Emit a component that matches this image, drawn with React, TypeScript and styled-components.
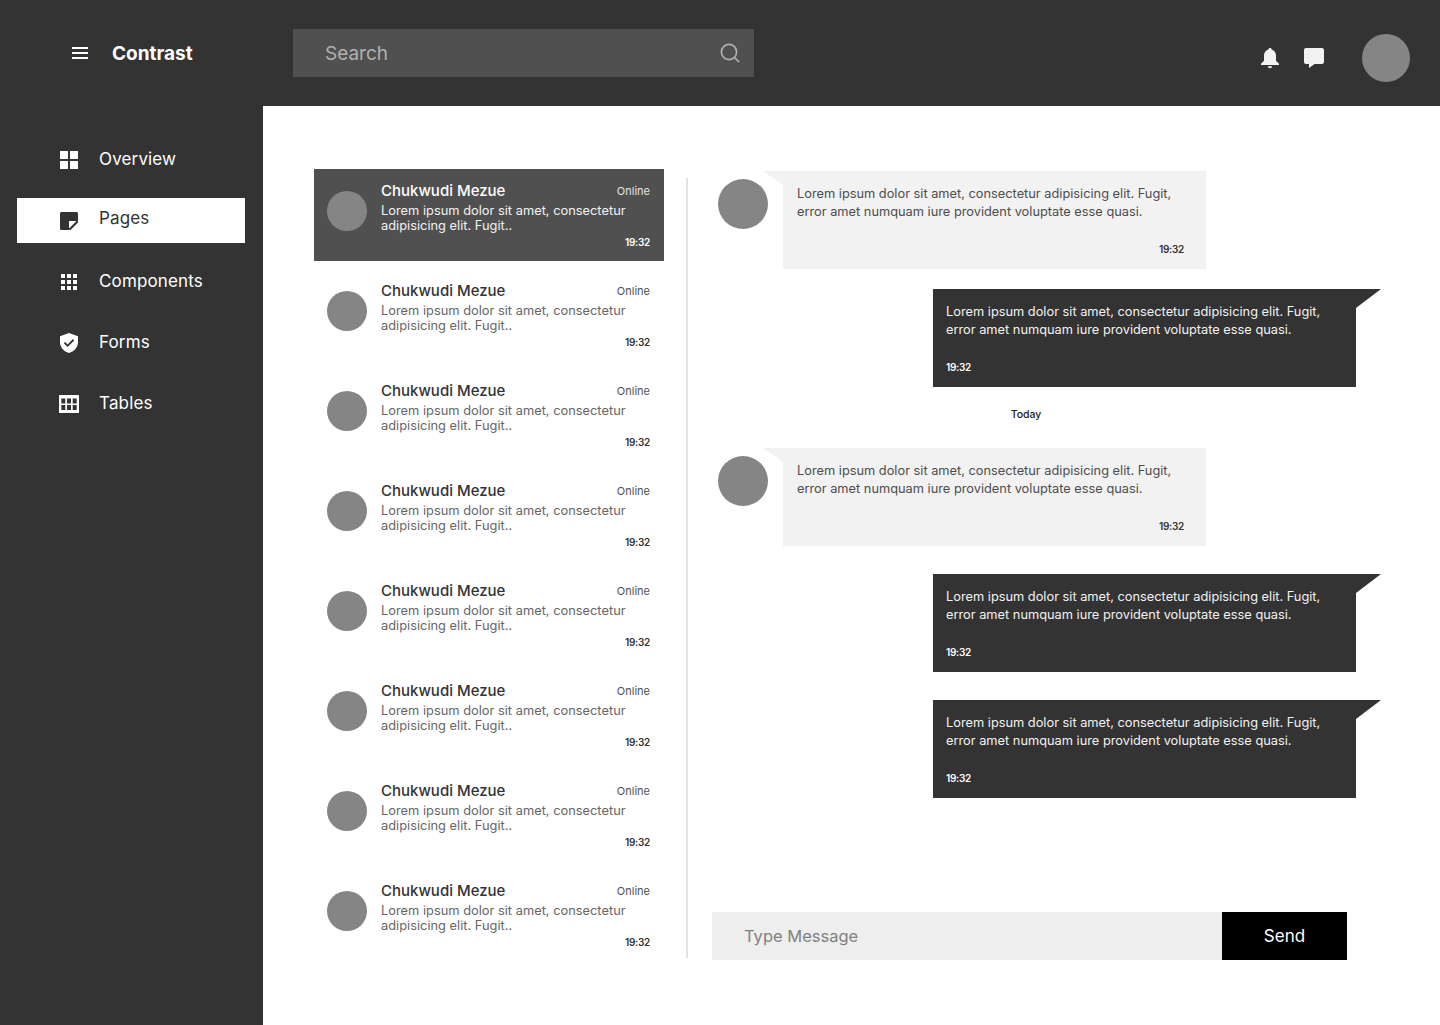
import React from 'react';
import styled, { createGlobalStyle } from 'styled-components';

const GlobalStyle = createGlobalStyle`
  * { box-sizing: border-box; }
  html, body { margin: 0; padding: 0; background: #ffffff; }
  body { font-family: Inter, 'Liberation Sans', sans-serif; color: #333333; }
`;

const Shell = styled.div`
  display: grid;
  grid-template-columns: 263px 1fr;
  grid-template-rows: 106px 919px;
  width: 1440px;
  height: 1025px;
  overflow: hidden;
`;

const Header = styled.header`
  grid-column: 1 / 3;
  display: flex;
  align-items: center;
  background: #333333;
  padding-left: 72px;
`;

const Brand = styled.div`
  display: flex;
  align-items: center;
  gap: 24px;
  width: 221px;
  color: #ffffff;
  font-size: 19px;
  font-weight: 700;
`;

const SearchBox = styled.div`
  display: flex;
  align-items: center;
  justify-content: space-between;
  width: 461px;
  height: 48px;
  padding: 0 14px 0 32px;
  background: #505050;
  color: #b0b0b0;
  font-size: 19px;
`;

const HeaderIcons = styled.div`
  display: flex;
  align-items: center;
  margin-left: auto;
  padding: 10px 30px 0 0;
`;

const IconSlot = styled.div<{ $right: number }>`
  display: flex;
  margin-right: ${p => p.$right}px;
`;

const Avatar = styled.div<{ $size: number }>`
  flex: none;
  width: ${p => p.$size}px;
  height: ${p => p.$size}px;
  border-radius: 50%;
  background: #858585;
`;

const Sidebar = styled.nav`
  display: flex;
  flex-direction: column;
  gap: 16px;
  padding: 31px 18px 0 17px;
  background: #333333;
`;

const NavItem = styled.a<{ $active?: boolean }>`
  display: flex;
  align-items: center;
  gap: 21px;
  height: 45px;
  padding-left: 43px;
  background: ${p => (p.$active ? '#ffffff' : 'transparent')};
  color: ${p => (p.$active ? '#333333' : '#ffffff')};
  font-size: 17px;
  letter-spacing: 0.15px;
`;

const NavIconBox = styled.span`
  display: flex;
  align-items: center;
  justify-content: center;
  width: 18px;

  svg {
    flex: none;
  }
`;

const NavLabel = styled.span<{ $active?: boolean }>`
  padding-bottom: ${p => (p.$active ? 5 : 2)}px;
`;

const Main = styled.main`
  display: flex;
  padding: 63px 0 0 51px;
`;

const ThreadList = styled.div`
  display: flex;
  flex-direction: column;
  gap: 8px;
  width: 350px;
`;

const Thread = styled.div<{ $active?: boolean }>`
  display: flex;
  align-items: flex-start;
  gap: 14px;
  height: 92px;
  padding: 13px 14px 0 13px;
  background: ${p => (p.$active ? '#505050' : 'transparent')};
  color: ${p => (p.$active ? '#ffffff' : '#333333')};

  & > ${Avatar} {
    margin-top: 9px;
  }
`;

const ThreadBody = styled.div`
  flex: 1;
  min-width: 0;
`;

const ThreadTop = styled.div`
  display: flex;
  align-items: center;
  justify-content: space-between;
  height: 18px;
`;

const ThreadName = styled.span`
  padding-bottom: 2px;
  font-size: 15px;
  font-weight: 500;
`;

const ThreadStatus = styled.span`
  font-size: 11px;
  opacity: 0.85;
`;

const ThreadText = styled.p<{ $active?: boolean }>`
  margin: 3px 0 0;
  font-size: 12.85px;
  line-height: 15px;
  color: ${p => (p.$active ? '#f2f2f2' : '#666666')};
`;

const ThreadTime = styled.div`
  margin-top: 1px;
  text-align: right;
  font-size: 10px;
  font-weight: 600;
  letter-spacing: -0.3px;
  line-height: 16px;
`;

const Divider = styled.div`
  flex: none;
  width: 2px;
  height: 780px;
  margin: 9px 24px 0 22px;
  background: #e2e2e2;
`;

const ChatPanel = styled.section`
  display: flex;
  flex-direction: column;
  width: 660px;
  height: 791px;
  padding-top: 2px;
`;

const Messages = styled.div`
  flex: 1;
  display: flex;
  flex-direction: column;
`;

const IncomingRow = styled.div`
  display: flex;
  gap: 15px;
  padding-left: 6px;

  & > ${Avatar} {
    margin-top: 8px;
  }
`;

const Bubble = styled.div<{ $dark?: boolean }>`
  position: relative;
  width: 423px;
  height: 98px;
  padding: ${p => (p.$dark ? '14px 13px' : '14px 14px')};
  background: ${p => (p.$dark ? '#333333' : '#f2f2f2')};
  color: ${p => (p.$dark ? '#f2f2f2' : '#4d4d4d')};

  &::before {
    content: '';
    position: absolute;
    top: 0;
    ${p => (p.$dark
      ? `left: 100%; width: 25px; height: 19px; background: #333333; clip-path: polygon(0 0, 100% 0, 0 100%);`
      : `right: 100%; width: 20px; height: 14px; background: #f2f2f2; clip-path: polygon(0 0, 100% 0, 100% 100%);`)}
  }
`;

const OutgoingBubble = styled(Bubble)<{ $top: number }>`
  margin-left: 221px;
  margin-top: ${p => p.$top}px;
`;

const BubbleText = styled.p`
  margin: 0;
  font-size: 12.8px;
  line-height: 18px;
`;

const BubbleTime = styled.div<{ $dark?: boolean }>`
  margin-top: 22px;
  padding-right: ${p => (p.$dark ? 0 : 8)}px;
  text-align: ${p => (p.$dark ? 'left' : 'right')};
  font-size: 10px;
  font-weight: 600;
  letter-spacing: -0.3px;
  line-height: 12px;
  color: ${p => (p.$dark ? '#ffffff' : '#333333')};
`;

const DayMark = styled.div`
  width: 628px;
  margin: 21px 0 26px;
  text-align: center;
  font-size: 10.5px;
  font-weight: 500;
  line-height: 14px;
  color: #222222;
`;

const Composer = styled.div`
  display: flex;
  width: 635px;
  height: 48px;
`;

const ComposerField = styled.div`
  flex: 1;
  display: flex;
  align-items: center;
  padding-left: 32px;
  background: #eeeeee;
  color: #808080;
  font-size: 16.5px;
`;

const SendButton = styled.button`
  width: 125px;
  border: 0;
  background: #000000;
  color: #ffffff;
  font-family: inherit;
  font-size: 17px;
`;

const MenuIcon = () => (
  <svg width="16" height="12" viewBox="0 0 16 12" fill="#fff">
    <path d="M0 0h16v2H0zM0 5h16v2H0zM0 10h16v2H0z" />
  </svg>
);

const SearchIcon = () => (
  <svg width="20" height="20" viewBox="0 0 20 20" fill="none" stroke="#b0b0b0" strokeWidth="1.7">
    <circle cx="9" cy="9" r="7.6" />
    <path d="M14.5 14.5l4.6 4.6" />
  </svg>
);

const BellIcon = () => (
  <svg width="18" height="21" viewBox="0 0 18 21" fill="#f2f2f2">
    <path d="M9 0c1 0 1.7.7 1.7 1.6 2.700.8 4.300 3.200 4.300 6v5.200l3 3v1.200H0v-1.200l3-3V7.600c0-2.800 1.600-5.200 4.300-6C7.300.7 8 0 9 0z" />
    <path d="M6.800 18.200h4.400c0 1.200-1 2-2.200 2s-2.200-.8-2.200-2z" />
  </svg>
);

const ChatIcon = () => (
  <svg width="20" height="20" viewBox="0 0 20 20" fill="#f2f2f2">
    <path d="M2 0h16c1.100 0 2 .9 2 2v12c0 1.100-.9 2-2 2h-7.400L5 20v-4H2c-1.100 0-2-.9-2-2V2C0 .9.900 0 2 0z" />
  </svg>
);

const OverviewIcon = () => (
  <svg width="18" height="18" viewBox="0 0 18 18" fill="currentColor">
    <path d="M0 0h8v8H0zM10 0h8v8h-8zM0 10h8v8H0zM10 10h8v8h-8z" />
  </svg>
);

const PagesIcon = () => (
  <svg width="18" height="18" viewBox="0 0 18 18" fill="currentColor">
    <path
      fillRule="evenodd"
      d="M1.500 0h15c.8 0 1.500.7 1.500 1.500v9L10.500 18h-9C.7 18 0 17.300 0 16.500v-15C0 .7.700 0 1.500 0zM9 9v7.500L16.500 9H9z"
    />
  </svg>
);

const ComponentsIcon = () => (
  <svg width="16" height="16" viewBox="0 0 16 16" fill="currentColor">
    <path d="M0 0h4v4H0zM6 0h4v4H6zM12 0h4v4h-4zM0 6h4v4H0zM6 6h4v4H6zM12 6h4v4h-4zM0 12h4v4H0zM6 12h4v4H6zM12 12h4v4h-4z" />
  </svg>
);

const FormsIcon = () => (
  <svg width="18" height="20" viewBox="0 0 18 20" fill="currentColor">
    <path
      fillRule="evenodd"
      d="M9 0l9 3.200v6c0 5-3.800 9.300-9 10.800-5.200-1.500-9-5.800-9-10.800v-6L9 0zM7.600 11.400L5.100 8.900 3.800 10.200l3.800 3.800 6.600-6.600-1.300-1.300-5.300 5.300z"
    />
  </svg>
);

const TablesIcon = () => (
  <svg width="20" height="18" viewBox="0 0 20 18" fill="currentColor">
    <path
      fillRule="evenodd"
      d="M1 0h18c.6 0 1 .4 1 1v16c0 .6-.4 1-1 1H1c-.6 0-1-.4-1-1V1c0-.6.4-1 1-1zM2.300 3.500v5h4v-5h-4zm5.700 0v5h4v-5H8zm5.700 0v5h4v-5h-4zM2.300 10v5h4v-5h-4zm5.700 0v5h4v-5H8zm5.700 0v5h4v-5h-4z"
    />
  </svg>
);

const navItems = [
  { label: 'Overview', icon: <OverviewIcon /> },
  { label: 'Pages', icon: <PagesIcon />, active: true },
  { label: 'Components', icon: <ComponentsIcon /> },
  { label: 'Forms', icon: <FormsIcon /> },
  { label: 'Tables', icon: <TablesIcon /> },
];

const threads = Array.from({ length: 8 }, (_, i) => ({ id: i, active: i === 0 }));

const messageText = (
  <>
    Lorem ipsum dolor sit amet, consectetur adipisicing elit. Fugit,
    <br />
    error amet numquam iure provident voluptate esse quasi.
  </>
);

const Incoming = () => (
  <IncomingRow>
    <Avatar $size={50} />
    <Bubble>
      <BubbleText>{messageText}</BubbleText>
      <BubbleTime>19:32</BubbleTime>
    </Bubble>
  </IncomingRow>
);

const Outgoing = ({ top }: { top: number }) => (
  <OutgoingBubble $dark $top={top}>
    <BubbleText>{messageText}</BubbleText>
    <BubbleTime $dark>19:32</BubbleTime>
  </OutgoingBubble>
);

const App: React.FC = () => (
  <Shell>
    <GlobalStyle />
    <Header>
      <Brand>
        <MenuIcon />
        Contrast
      </Brand>
      <SearchBox>
        <span>Search</span>
        <SearchIcon />
      </SearchBox>
      <HeaderIcons>
        <IconSlot $right={25}>
          <BellIcon />
        </IconSlot>
        <IconSlot $right={38}>
          <ChatIcon />
        </IconSlot>
        <Avatar $size={48} />
      </HeaderIcons>
    </Header>
    <Sidebar>
      {navItems.map(item => (
        <NavItem key={item.label} $active={item.active}>
          <NavIconBox>{item.icon}</NavIconBox>
          <NavLabel $active={item.active}>{item.label}</NavLabel>
        </NavItem>
      ))}
    </Sidebar>
    <Main>
      <ThreadList>
        {threads.map(t => (
          <Thread key={t.id} $active={t.active}>
            <Avatar $size={40} />
            <ThreadBody>
              <ThreadTop>
                <ThreadName>Chukwudi Mezue</ThreadName>
                <ThreadStatus>Online</ThreadStatus>
              </ThreadTop>
              <ThreadText $active={t.active}>
                Lorem ipsum dolor sit amet, consectetur
                <br />
                adipisicing elit. Fugit..
              </ThreadText>
              <ThreadTime>19:32</ThreadTime>
            </ThreadBody>
          </Thread>
        ))}
      </ThreadList>
      <Divider />
      <ChatPanel>
        <Messages>
          <Incoming />
          <Outgoing top={20} />
          <DayMark>Today</DayMark>
          <Incoming />
          <Outgoing top={28} />
          <Outgoing top={28} />
        </Messages>
        <Composer>
          <ComposerField>Type Message</ComposerField>
          <SendButton>Send</SendButton>
        </Composer>
      </ChatPanel>
    </Main>
  </Shell>
);

export default App;
